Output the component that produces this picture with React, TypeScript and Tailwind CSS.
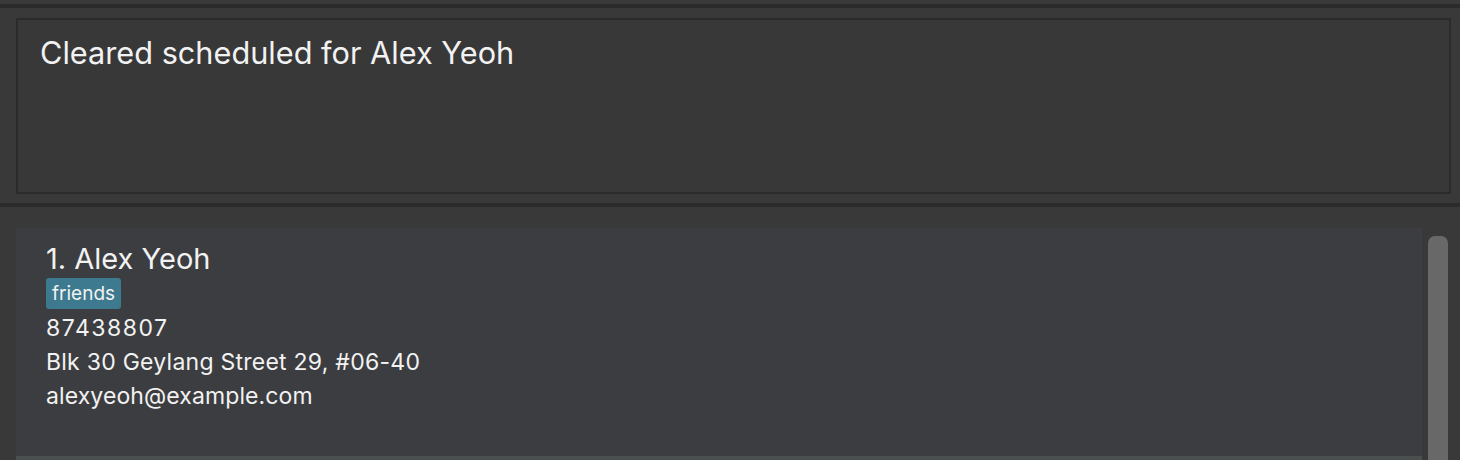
import React from 'react';

const font = { fontFamily: 'Inter, "Noto Sans", sans-serif' };

export default function App() {
  return (
    <div className="h-[460px] w-[1460px] overflow-hidden bg-[#393939] text-[#f2f2f2]" style={font}>
      <div className="h-[4px] bg-[#3a3a3a]" />
      <div className="h-[4px] bg-[#2b2b2b]" />
      <div className="h-[195px] pl-[16px] pr-[9px] pt-[10px] pb-[9px]">
        <div className="h-full border-2 border-[#2b2b2b] bg-[#383838] px-[22px] pt-[14px]">
          <div className="text-[30.7px] leading-[38px]">Cleared scheduled for Alex Yeoh</div>
        </div>
      </div>
      <div className="h-[4px] bg-[#2b2b2b]" />
      <div className="flex pt-[21px] pl-[16px]">
        <div className="flex w-[1406px] flex-col">
          <div className="h-[228px] bg-[#3c3d40] pl-[30px] pt-[14px]">
            <div className="text-[29px] leading-[34px]">1. Alex Yeoh</div>
            <div className="mt-[2px] flex">
              <span className="rounded-[3px] bg-[#3e7a8f] px-[6px] pt-[1px] text-[19px] leading-[30px]">friends</span>
            </div>
            <div className="mt-[2px] text-[23px] leading-[34px] tracking-[1.5px]">87438807</div>
            <div className="text-[23px] leading-[34px] tracking-[0.25px]">Blk 30 Geylang Street 29, #06-40</div>
            <div className="text-[23px] leading-[34px] tracking-[0.1px]">alexyeoh@example.com</div>
          </div>
          <div className="h-[20px] bg-[#4a5050]" />
        </div>
        <div className="ml-[6px] w-[20px] pt-[8px]">
          <div className="h-[300px] rounded-[7px] bg-[#686868]" />
        </div>
      </div>
    </div>
  );
}
